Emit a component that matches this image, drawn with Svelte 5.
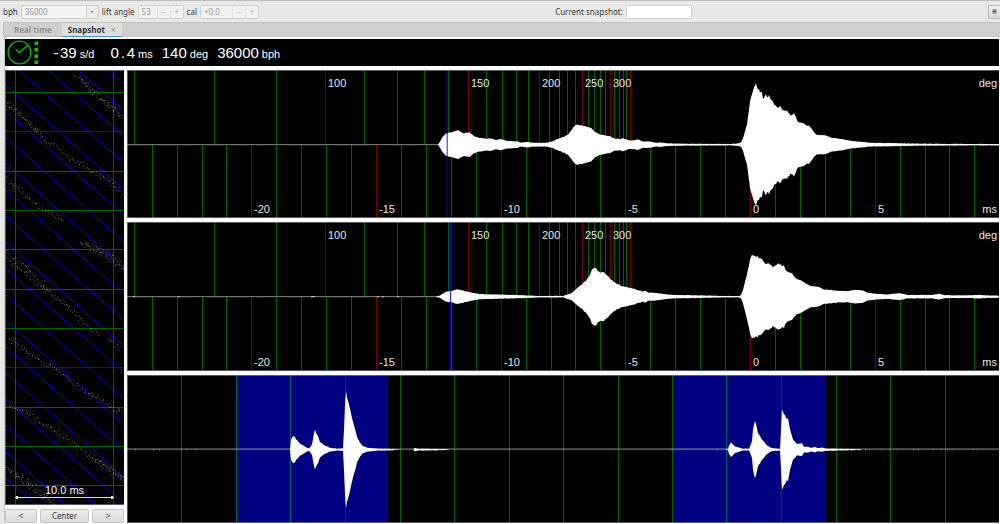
<!--
  WATCH TIMEGRAPHER
  Snapshot view: paper strip, tic / toc waveforms and full period
-->
<script lang="ts">
  type Point = [number, number];

  interface Line {
    x: number;
    major: boolean;
    label?: string;
  }

  const W = 872;
  const H = 148;
  const MID = 74;

  let tab = "snapshot";
  let snapshotName = "";

  const readings = [
    { value: "-39", unit: "s/d" },
    { value: "0.4", unit: "ms" },
    { value: "140", unit: "deg" },
    { value: "36000", unit: "bph" },
  ];

  // small deterministic generator, keeps the traces stable between renders
  function makeRandom(seed: number) {
    let s = seed;
    return () => {
      s = (s * 16807) % 2147483647;
      return s / 2147483647;
    };
  }

  function sample(points: Point[], x: number) {
    for (let i = 1; i < points.length; i++) {
      const [x0, y0] = points[i - 1];
      const [x1, y1] = points[i];
      if (x >= x0 && x <= x1) return y0 + ((y1 - y0) * (x - x0)) / (x1 - x0);
    }
    return 0;
  }

  // mirrored envelope around the centre line
  function envelope(points: Point[], seed: number) {
    const random = makeRandom(seed);
    const top: string[] = [];
    const bottom: string[] = [];
    for (let x = 0; x <= W; x++) {
      const h = sample(points, x);
      const a = h > 0 ? h * (0.97 + random() * 0.06) + random() * 0.4 : 0;
      top.push(`${x} ${(MID + 0.5 - a).toFixed(2)}`);
      bottom.unshift(`${x} ${(MID + 0.5 + a).toFixed(2)}`);
    }
    return `M${top.join("L")}L${bottom.join("L")}Z`;
  }

  const degLines: Line[] = [
    7, 87, 149, 198, 237, 270, 297, 321, 341, 359, 375, 389, 401, 412, 422,
    432, 440, 448, 455, 461, 467, 473, 478, 483, 487, 492, 496, 499, 503,
  ].map((x, i) => ({ x, major: i === 3 || (i > 3 && (i - 3) % 5 === 0) }));

  const msLines: Line[] = [];
  for (let ms = -24; ms <= 9; ms++) {
    const major = ms % 5 === 0;
    msLines.push({
      x: Math.floor(623.5 + ms * 24.93),
      major,
      label: major ? String(ms) : "",
    });
  }

  const degLabels = [
    { x: 198, label: "100" },
    { x: 341, label: "150" },
    { x: 412, label: "200" },
    { x: 455, label: "250" },
    { x: 483, label: "300" },
  ];

  const tic: Point[] = [
    [311, 0], [313, 3], [316, 8], [319, 11], [325, 12.5], [331, 14],
    [336, 11], [342, 12], [346, 9], [351, 7], [358, 5.7], [364, 6],
    [369, 4.3], [373, 5.5], [380, 3.7], [391, 3], [394, 1.7], [400, 2.6],
    [406, 1.7], [420, 1.7], [425, 3], [430, 5], [435, 7], [441, 10],
    [445, 15], [448, 19], [451, 20], [455, 19], [460, 17.5], [464, 16.5],
    [468, 12.5], [473, 10], [478, 9], [483, 8.3], [488, 5.6], [493, 5.6],
    [496, 6.3], [501, 4.3], [506, 4], [511, 5], [516, 3], [523, 3],
    [528, 1.7], [533, 2], [541, 1], [573, 0.6], [605, 0.5], [612, 1.2],
    [614, 2], [616, 6], [620, 20], [623, 42], [626, 55], [629, 59.5],
    [631, 55], [634, 52], [635, 50.5], [636, 45], [639, 51], [640, 47],
    [642, 49], [646, 42.5], [651, 35.5], [653, 39], [656, 33.5], [660, 34],
    [664, 28.5], [667, 31.5], [671, 22.5], [676, 21.5], [680, 18.5],
    [682, 19], [686, 13.5], [690, 9.5], [698, 9.3], [705, 6.6], [716, 5.3],
    [723, 3.6], [733, 2.7], [743, 1.7], [766, 1.4], [780, 1], [806, 0.7],
    [860, 0.4], [872, 0.4],
  ];

  const toc: Point[] = [
    [309, 0], [313, 1], [316, 3.3], [319, 4.7], [324, 5.3], [330, 7],
    [335, 6], [343, 4.3], [348, 3.3], [353, 2.3], [366, 2], [380, 1.7],
    [401, 1], [410, 0.5], [436, 0.5], [441, 2.3], [445, 3.7], [450, 8.3],
    [456, 13], [460, 17.3], [463, 21.5], [465, 28], [469, 29.3],
    [471, 25], [477, 24], [481, 20], [486, 15], [491, 12], [496, 10],
    [503, 8.6], [508, 7.3], [515, 5], [518, 5.7], [521, 4], [528, 3.6],
    [536, 2.6], [546, 1.6], [560, 1.3], [576, 1], [593, 0.6], [611, 0.4],
    [614, 1.3], [616, 6.6], [620, 21.6], [623, 36], [625, 41], [631, 39.5],
    [636, 36], [640, 31.7], [641, 33.5], [646, 29.3], [649, 31.6],
    [651, 32.4], [655, 30.6], [657, 30.6], [659, 25.3], [665, 23.3],
    [670, 17.3], [676, 15], [680, 12], [685, 10.3], [690, 10], [696, 7.3],
    [706, 6], [720, 5.3], [728, 6.6], [736, 6], [741, 3.6], [748, 2.6],
    [760, 2], [773, 3.3], [780, 1.6], [793, 1.6], [806, 1.6], [812, 2.8],
    [818, 1.3], [840, 1], [851, 1.6], [860, 1], [872, 0.8],
  ];

  const period: Point[] = [
    [163, 0], [164, 10], [166, 13.3], [167, 13.3], [170, 9.3], [173, 6],
    [178, 2.6], [182, 1], [185, 5], [187, 16], [188, 19.3], [191, 13],
    [193, 7.3], [198, 4], [203, 1.6], [211, 0.6], [216, 1], [217, 20],
    [218, 46], [219, 57], [221, 49], [226, 28], [230, 13], [233, 6.6],
    [236, 3.3], [241, 1.6], [251, 0.8], [265, 0.4], [272, 0], [286, 0],
    [288, 1.4], [291, 0.7], [320, 0.2], [322, 0], [599, 0], [601, 0.3],
    [602, 4], [604, 7], [608, 3], [616, 0.6], [622, 0.6], [625, 8.3],
    [626, 20], [628, 29], [631, 16.6], [635, 10], [640, 4], [645, 1.3],
    [653, 0.6], [654, 20], [655, 40.6], [658, 33.5], [660, 30.6],
    [661, 31.6], [663, 20], [666, 10], [670, 5.6], [675, 6.3], [677, 2.6],
    [681, 2.6], [684, 1.6], [688, 2.6], [691, 1.3], [695, 2], [698, 1],
    [713, 0.6], [730, 0.2], [735, 0],
  ];

  const beats = [
    { name: "Tic waveform", path: envelope(tic, 11), marker: 320, faint: true, specks: [] as number[] },
    {
      name: "Toc waveform",
      path: envelope(toc, 29),
      marker: 323,
      faint: false,
      specks: [6, 51, 184, 186, 250, 255, 270],
    },
  ];

  const periodLines = [54, 109, 163, 218, 273, 327, 382, 436, 491, 545, 599, 654, 709, 763, 818];
  const periodPath = envelope(period, 47);
  const periodSpecks = [8, 26, 32, 59, 69, 543, 590, 738, 742, 754, 762, 770, 786, 791, 806, 814, 820, 826, 846, 850];

  // paper strip
  const stripRows = Array.from({ length: 11 }, (_, k) => ({
    y: Math.floor(22.3 + k * 39.36) + 0.5,
    major: k % 6 === 1,
  }));
  const stripSlopes = Array.from({ length: 21 }, (_, k) => 14.5 + (k - 4) * 26.2);

  const tracks: Point[][] = [
    [[69, 3], [84, 16], [102, 34], [119, 48]],
    [[76, 9], [86, 22], [100, 31], [114, 43]],
    [[0, 31], [15, 43], [22, 51], [32, 61], [40, 71], [57, 79], [63, 88], [78, 94], [90, 103], [105, 111], [119, 124]],
    [[0, 36], [17, 45], [24, 54], [36, 62]],
    [[0, 108], [18, 123], [27, 132], [47, 143], [58, 151]],
    [[75, 173], [95, 183], [119, 200]],
    [[80, 173], [104, 184], [119, 195]],
    [[0, 181], [28, 203], [35, 213], [43, 220], [50, 227], [65, 238], [75, 250], [93, 263]],
    [[0, 188], [15, 198], [30, 211], [42, 220]],
    [[103, 269], [115, 278]],
    [[3, 270], [25, 282], [35, 292], [50, 298], [67, 312], [78, 320], [95, 328], [108, 339], [118, 341]],
    [[0, 335], [23, 342], [35, 352], [53, 362], [70, 375], [85, 387], [102, 398], [119, 410]],
    [[84, 384], [100, 395], [119, 409]],
    [[0, 397], [15, 407], [32, 417], [50, 435]],
    [[4, 402], [20, 413], [34, 424], [46, 433]],
  ];

  function scatter(list: Point[][]) {
    const random = makeRandom(7);
    const dots: { x: number; y: number; o: number }[] = [];
    for (const track of list) {
      const end = track[track.length - 1][0];
      for (let x = track[0][0]; x < end; x += 0.8) {
        dots.push({
          x: Math.round(x + random() * 2 - 1),
          y: Math.round(sample(track, x) + random() * 5 - 2.5),
          o: 0.1 + random() * 0.22,
        });
      }
    }
    return dots;
  }

  const dots = scatter(tracks);
</script>

<div class="window">
  <div class="toolbar">
    <div class="group">
      <label for="bph">bph</label>
      <span class="combo">
        <select id="bph" disabled>
          <option>36000</option>
        </select>
        <svg viewBox="0 0 4 3" aria-hidden="true"><path d="M0 0h4L2 2.5z" fill="#999" /></svg>
      </span>
      <label for="lift">lift angle</label>
      <span class="spin">
        <input id="lift" class="short" type="text" value="53" disabled />
        <button type="button" aria-label="Decrease lift angle" disabled>−</button>
        <button type="button" aria-label="Increase lift angle" disabled>+</button>
      </span>
      <label for="cal">cal</label>
      <span class="spin">
        <input id="cal" class="long" type="text" value="+0.0" disabled />
        <button type="button" aria-label="Decrease calibration" disabled>−</button>
        <button type="button" aria-label="Increase calibration" disabled>+</button>
      </span>
    </div>

    <div class="group">
      <label for="name">Current snapshot:</label>
      <input id="name" class="name" type="text" bind:value={snapshotName} />
    </div>

    <button class="menu" type="button" aria-label="Menu">
      <svg viewBox="0 0 5 5" aria-hidden="true">
        <path d="M0.500 1h4M0.500 2.500h4M0.500 4h4" stroke="#444" stroke-width="0.9" />
      </svg>
    </button>
  </div>

  <div class="tabs">
    <button class="tab" class:active={tab === "realtime"} type="button" on:click={() => (tab = "realtime")}>
      Real time
    </button>
    <button class="tab" class:active={tab === "snapshot"} type="button" on:click={() => (tab = "snapshot")}>
      Snapshot <span class="close">×</span>
    </button>
  </div>

  <main>
    <header class="readout">
      <svg class="clock" viewBox="0 0 36 27" aria-hidden="true">
        <g fill="none" stroke="#00bb00" stroke-width="1.3">
          <circle cx="14.400" cy="13.500" r="11.300" />
          <path d="M10.600 10L14.200 13.800L22.300 6.800" />
        </g>
        <g fill="#00cc00">
          <rect x="29.500" y="2.500" width="3.500" height="3.500" />
          <rect x="29.500" y="9" width="3.500" height="3.500" />
          <rect x="29.500" y="15.500" width="3.500" height="3.500" />
          <rect x="29.500" y="21.500" width="3.500" height="3.500" />
        </g>
      </svg>
      {#each readings as r}
        <span class="reading">
          <span class="value">{#each r.value as ch}<span class:cell={ch === "." || ch === "-"}>{ch}</span>{/each}</span>
          <span class="unit">{r.unit}</span>
        </span>
      {/each}
    </header>

    <div class="body">
      <section class="side">
        <div class="strip">
          <svg viewBox="0 0 119 435" preserveAspectRatio="none" aria-hidden="true">
            {#each stripSlopes as y}
              <line x1="0" y1={y} x2="119" y2={y + 105} stroke="#0000d8" />
            {/each}
            {#each stripRows as row}
              <line x1="0" y1={row.y} x2="119" y2={row.y} stroke={row.major ? "#6e0000" : "#006400"} />
            {/each}
            <path d="M10.500 0V435M108.500 0V435" stroke="#006400" />
            {#each dots as d}
              <rect x={d.x} y={d.y} width="1" height="1" fill="#fff" opacity={d.o} />
            {/each}
            <path d="M10.500 427.500H108.500" stroke="#ddd" />
            <path d="M10.500 427.500l1.500-1.500l1.500 1.500l-1.500 1.500zM105.500 427.500l1.500-1.500l1.500 1.500l-1.500 1.500z" fill="#fff" stroke="#fff" stroke-width="0.8" />
          </svg>
          <span class="scale">10.0 ms</span>
        </div>
        <div class="nav">
          <button type="button" aria-label="Shift left">&lt;</button>
          <button class="wide" type="button">Center</button>
          <button type="button" aria-label="Shift right">&gt;</button>
        </div>
      </section>

      <section class="plots">
        {#each beats as beat}
          <div class="plot">
            <svg viewBox="0 0 {W} {H}" preserveAspectRatio="none" role="img" aria-label={beat.name}>
              {#each degLines as l}
                <line x1={l.x + 0.5} x2={l.x + 0.5} y1="0" y2={MID} class:major={l.major} />
              {/each}
              {#each msLines as l}
                <line x1={l.x + 0.5} x2={l.x + 0.5} y1={MID} y2={H} class:major={l.major} />
              {/each}
              <rect x="0" y={MID} width={W} height="1" fill="#8a8a8a" />
              {#each beat.specks as x}
                <rect {x} y={MID} width="2" height="1" fill="#ccc" />
              {/each}
              <path d={beat.path} fill="#fff" />
              <rect
                x={beat.marker - (beat.faint ? 0.5 : 0)}
                y="0"
                width={beat.faint ? 1.5 : 1}
                height={H}
                fill="#0000ff"
                opacity={beat.faint ? 0.6 : 0.85}
              />
            </svg>
            {#each degLabels as l}
              <span class="label top" style="left: {((l.x + 3) / W) * 100}%">{l.label}</span>
            {/each}
            {#each msLines.filter((l) => l.label) as l}
              <span class="label bottom" style="left: {((l.x + 3) / W) * 100}%">{l.label}</span>
            {/each}
            <span class="label top axis">deg</span>
            <span class="label bottom axis">ms</span>
          </div>
        {/each}

        <div class="plot">
          <svg viewBox="0 0 {W} {H}" preserveAspectRatio="none" role="img" aria-label="Full period">
            <rect x="109" y="0" width="152" height={H} fill="#000080" />
            <rect x="546" y="0" width="152" height={H} fill="#000080" />
            {#each periodLines as x}
              <line x1={x + 0.5} x2={x + 0.5} y1="0" y2={H} class:major={x === 218 || x === 654} />
            {/each}
            <rect x="0" y={MID - 1} width={W} height="2" fill="#fff" opacity="0.3" />
            {#each periodSpecks as x}
              <rect {x} y={MID} width="1" height="1" fill="#999" />
            {/each}
            <path d={periodPath} fill="#fff" />
          </svg>
        </div>
      </section>
    </div>
  </main>
</div>

<style>
  :global(body) {
    margin: 0;
    background: #e8e8e7;
  }

  .window {
    display: flex;
    flex-direction: column;
    box-sizing: border-box;
    min-height: 100vh;
    border-top: 1px solid #bdbdbb;
    overflow: hidden;
    background: #e8e8e7;
    color: #363a3b;
    font-family: "Noto Sans", "Open Sans", sans-serif;
    font-size: 8px;
  }

  button,
  input,
  select {
    box-sizing: border-box;
    margin: 0;
    padding: 0;
    font: inherit;
    color: inherit;
  }

  .toolbar {
    display: flex;
    justify-content: space-between;
    align-items: center;
    height: 21px;
    padding-left: 3px;
  }

  .group {
    display: flex;
    align-items: center;
    gap: 3px;
  }

  .combo {
    position: relative;
    display: flex;
  }

  .combo select {
    width: 78px;
    height: 14px;
    padding-left: 3px;
    border: 1px solid #d0d0ce;
    border-radius: 2px;
    appearance: none;
    background: linear-gradient(90deg, #f3f3f2 64px, #d6d6d4 64px, #d6d6d4 65px, #ececeb 65px);
    color: #999;
    opacity: 1;
  }

  .combo svg {
    position: absolute;
    right: 5px;
    top: 6px;
    width: 4px;
    height: 3px;
  }

  .spin {
    display: flex;
    box-sizing: border-box;
    height: 14px;
    border: 1px solid #d0d0ce;
    border-radius: 2px;
    background: #f1f1f0;
    color: #999;
  }

  .spin input {
    padding-left: 3px;
    border: 0;
    background: none;
  }

  .spin .short {
    width: 18px;
  }

  .spin .long {
    width: 31px;
  }

  .spin button {
    width: 13px;
    border: 0;
    border-left: 1px solid #e2e2e0;
    background: none;
    color: #b4b4b2;
    line-height: 10px;
  }

  .name {
    width: 66px;
    height: 14px;
    border: 1px solid #d0d0ce;
    border-radius: 2px;
    background: #fff;
  }

  .menu {
    display: flex;
    align-items: center;
    justify-content: center;
    width: 12px;
    height: 14px;
    border: 1px solid #b9b9b7;
    border-right: 0;
    border-radius: 2px 0 0 2px;
    background: linear-gradient(#eeeeed, #d9d9d8);
  }

  .menu svg {
    width: 5px;
    height: 5px;
  }

  .tabs {
    display: flex;
    box-sizing: border-box;
    height: 15px;
    margin-left: 3px;
    border-top: 1px solid #c2c2c0;
    border-left: 1px solid #c2c2c0;
    background: #cfcfcd;
  }

  .tab {
    height: 14px;
    padding: 0 10px;
    border: 0;
    border-bottom: 1px solid #c2c2c0;
    background: none;
    color: #8f9392;
    font-weight: 700;
    line-height: 13px;
    white-space: nowrap;
  }

  .tab.active {
    padding: 0 6px;
    border-bottom-color: #4a90d9;
    background: #dededc;
    color: #2e3436;
  }

  .close {
    margin-left: 4px;
    color: #999;
    font-weight: 400;
  }

  main {
    flex: 1;
    display: flex;
    flex-direction: column;
    gap: 4px;
    margin-left: 4px;
    padding: 2px 1px 1px 0;
    border-left: 1px solid #c8c8c6;
    background: #fff;
  }

  .readout {
    display: flex;
    align-items: center;
    height: 27px;
    background: #000;
    color: #fff;
    font-family: "Liberation Sans", Arial, sans-serif;
  }

  .clock {
    width: 36px;
    height: 27px;
    margin-right: 11px;
  }

  .reading {
    display: flex;
    align-items: baseline;
    gap: 3px;
    margin-right: 9px;
  }

  .reading:nth-of-type(1) {
    margin-right: 16px;
  }

  .value {
    font-size: 15px;
  }

  .cell {
    display: inline-block;
    width: 8px;
    text-align: center;
  }

  .unit {
    font-size: 11px;
  }

  .body {
    flex: 1;
    display: grid;
    grid-template-columns: 119px 1fr;
    gap: 3px;
  }

  .side {
    display: flex;
    flex-direction: column;
    gap: 4px;
  }

  .strip {
    position: relative;
    flex: 1;
    background: #000;
  }

  .strip svg,
  .plot svg {
    position: absolute;
    inset: 0;
    width: 100%;
    height: 100%;
  }

  .scale {
    position: absolute;
    left: 0;
    right: 0;
    bottom: 8px;
    color: #fff;
    font-family: "Liberation Sans", Arial, sans-serif;
    font-size: 11px;
    line-height: 14px;
    text-align: center;
  }

  .nav {
    display: flex;
    gap: 3px;
  }

  .nav button {
    flex: 1;
    height: 14px;
    border: 1px solid #c6c6c4;
    border-radius: 2px;
    background: linear-gradient(#ececeb, #dcdcdb);
    line-height: 12px;
  }

  .nav .wide {
    flex: 0 0 49px;
  }

  .plots {
    display: grid;
    grid-template-rows: repeat(3, 1fr);
    gap: 4px;
  }

  .plot {
    position: relative;
    background: #000;
  }

  .plot::after,
  .strip::after {
    content: "";
    position: absolute;
    inset: 0;
    border: 1px solid rgba(255, 255, 255, 0.35);
    border-right-width: 0;
    pointer-events: none;
  }

  .plot line {
    stroke: rgba(0, 255, 0, 0.38);
    stroke-width: 1px;
  }

  .plot line.major {
    stroke: rgba(255, 0, 0, 0.48);
  }

  .label {
    position: absolute;
    color: #e6e6e6;
    font-family: "Liberation Sans", Arial, sans-serif;
    font-size: 11px;
    line-height: 14px;
  }

  .top {
    top: 6px;
  }

  .bottom {
    bottom: 2px;
  }

  .axis {
    right: 2px;
  }
</style>
